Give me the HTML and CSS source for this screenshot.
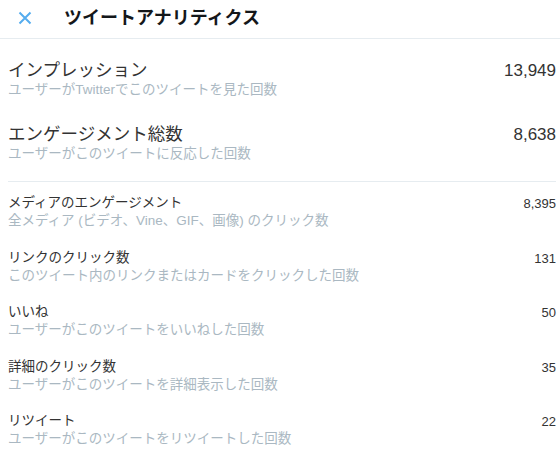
FILE: index.html
```html
<!DOCTYPE html>
<html lang="ja">
<head>
    <meta charset="UTF-8">
    <meta name="viewport" content="width=device-width, initial-scale=1.0">
    <title>ツイートアナリティクス</title>
    <link rel="stylesheet" href="styles.css">
</head>
<body>
    <div class="header">
        <svg class="close" width="14" height="14" viewBox="0 0 14 14">
            <path d="M1.5 1.5 L12.5 12.5 M12.5 1.5 L1.5 12.5" stroke="#55acee" stroke-width="2" fill="none"/>
        </svg>
        <h2>ツイートアナリティクス</h2>
    </div>

    <div class="panel">
        <div class="row big">
            <div class="info">
                <div class="label">インプレッション</div>
                <div class="desc">ユーザーがTwitterでこのツイートを見た回数</div>
            </div>
            <div class="num">13,949</div>
        </div>
        <div class="row big">
            <div class="info">
                <div class="label">エンゲージメント総数</div>
                <div class="desc">ユーザーがこのツイートに反応した回数</div>
            </div>
            <div class="num">8,638</div>
        </div>

        <hr>

        <div class="row">
            <div class="info">
                <div class="label">メディアのエンゲージメント</div>
                <div class="desc">全メディア (ビデオ、Vine、GIF、画像) のクリック数</div>
            </div>
            <div class="num">8,395</div>
        </div>
        <div class="row">
            <div class="info">
                <div class="label">リンクのクリック数</div>
                <div class="desc">このツイート内のリンクまたはカードをクリックした回数</div>
            </div>
            <div class="num">131</div>
        </div>
        <div class="row">
            <div class="info">
                <div class="label">いいね</div>
                <div class="desc">ユーザーがこのツイートをいいねした回数</div>
            </div>
            <div class="num">50</div>
        </div>
        <div class="row">
            <div class="info">
                <div class="label">詳細のクリック数</div>
                <div class="desc">ユーザーがこのツイートを詳細表示した回数</div>
            </div>
            <div class="num">35</div>
        </div>
        <div class="row">
            <div class="info">
                <div class="label">リツイート</div>
                <div class="desc">ユーザーがこのツイートをリツイートした回数</div>
            </div>
            <div class="num">22</div>
        </div>
    </div>
</body>
</html>
```

FILE: styles.css
```css
body {
    margin: 0;
    font-family: "Liberation Sans", "Noto Sans CJK JP", sans-serif;
    color: #333;
    background: #fff;
    overflow: hidden;
}
.header {
    display: flex;
    align-items: center;
    height: 36px;
    padding: 0 0 2px 18px;
    border-bottom: 1px solid #e6ecf0;
}
.close {
    display: block;
}
.header h2 {
    margin: 0 0 0 32px;
    font-size: 18px;
    font-weight: bold;
    color: #14171a;
    line-height: 22px;
}
.panel {
    width: 548px;
    padding: 20px 10px 40px 8px;
    border-right: 1px solid #e1e8ed;
}
.row {
    display: flex;
    justify-content: space-between;
    align-items: flex-start;
    margin-bottom: 18.5px;
}
.label {
    font-size: 13.5px;
    line-height: 18px;
}
.desc {
    font-size: 13.5px;
    line-height: 18px;
    color: #aab8c2;
}
.num {
    font-size: 13px;
    line-height: 18px;
    padding-top: 1px;
}
.big {
    margin-bottom: 24px;
}
.big .label {
    font-size: 17.5px;
    line-height: 22px;
}
.big .num {
    font-size: 17px;
    line-height: 22px;
}
hr {
    border: none;
    border-top: 1px solid #e6ecf0;
    margin: -6px 0 12px;
}
```
